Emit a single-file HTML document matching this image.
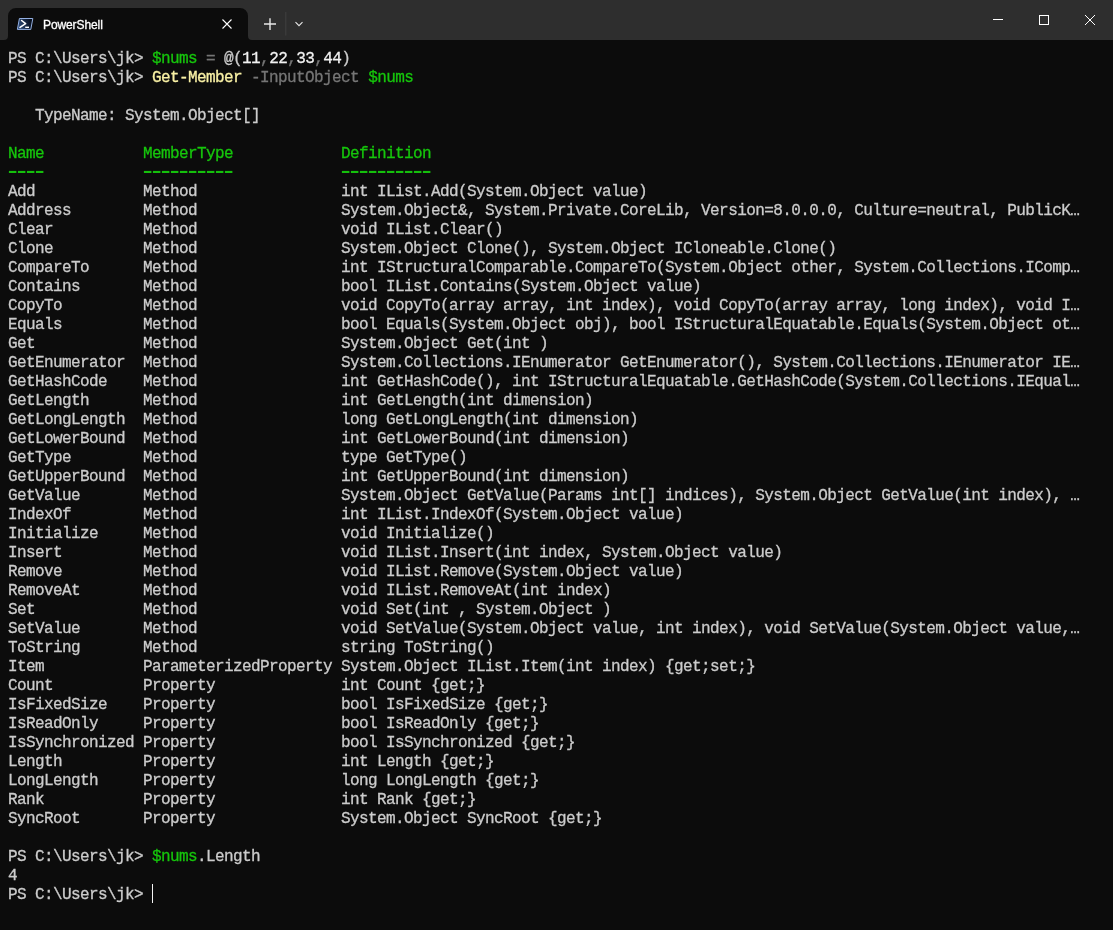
<!DOCTYPE html>
<html><head><meta charset="utf-8">
<style>
html,body{margin:0;padding:0;}
body{width:1113px;height:930px;overflow:hidden;background:#0c0c0c;position:relative;}
#tb{position:absolute;left:0;top:0;}
#tabt{position:absolute;left:43px;top:18px;letter-spacing:-0.1px;height:14px;line-height:14px;font:12px "Liberation Sans",sans-serif;color:#fff;-webkit-text-stroke:0.3px #fff;will-change:transform;}
#term{position:absolute;left:0;top:0;width:1113px;height:930px;will-change:transform;}
.r{position:absolute;left:8px;height:19px;line-height:19px;white-space:pre;font-family:"Liberation Mono",monospace;font-size:16px;letter-spacing:-0.6px;color:#cccccc;-webkit-font-smoothing:antialiased;-webkit-text-stroke:0.3px currentColor;}
.g{color:#16c60c}.d{color:#767676}.w{color:#f2f2f2}.y{color:#f9f1a5}.h{color:#16c60c}
.dash{position:absolute;height:2px;background:#15bc0c;}
#cur{position:absolute;left:152px;top:884px;width:1px;height:19px;background:#f4f4f4;}
</style></head><body>
<svg id="tb" width="1113" height="40" viewBox="0 0 1113 40">
<rect x="0" y="0" width="1113" height="40" fill="#2e2e2e"/>
<path d="M4 40 A4 4 0 0 0 8 36 L8 16 A8 8 0 0 1 16 8 L240 8 A8 8 0 0 1 248 16 L248 36 A4 4 0 0 0 252 40 Z" fill="#0c0c0c"/>
<defs><linearGradient id="ig" x1="0" y1="0.3" x2="1" y2="0.1"><stop offset="0" stop-color="#2c4a78"/><stop offset="0.5" stop-color="#152540"/><stop offset="1" stop-color="#03060e"/></linearGradient></defs>
<path d="M19.4 18.5 L32.8 18.5 L30.8 29.4 L17.4 29.4 Z" fill="url(#ig)" stroke="#94b0e2" stroke-width="1"/>
<path d="M21.6 20.5 L25.6 23.7 L20 27.4" fill="none" stroke="#fff" stroke-width="1.6" stroke-linecap="round" stroke-linejoin="round"/>
<path d="M25.2 27.3 L29 27.3" fill="none" stroke="#fff" stroke-width="1.4" stroke-linecap="butt"/>
<path d="M222.5 19.5 L231.5 28.5 M231.5 19.5 L222.5 28.5" stroke="#fff" stroke-width="1.1" fill="none"/>
<path d="M264 24 L276 24 M270 18.2 L270 30" stroke="#e8e8e8" stroke-width="1.4" fill="none"/>
<rect x="285.3" y="12" width="1" height="23.5" fill="#404040"/>
<path d="M295.5 22.2 L299 25.7 L302.5 22.2" stroke="#e8e8e8" stroke-width="1.1" fill="none"/>
<rect x="993" y="19" width="10" height="1" fill="#fff"/>
<rect x="1039.5" y="15.5" width="9" height="9" stroke="#fff" stroke-width="1" fill="none"/>
<path d="M1085 15 L1095 25 M1095 15 L1085 25" stroke="#fff" stroke-width="1" fill="none"/>
</svg>
<div id="tabt">PowerShell</div>
<div id="term">
<svg style="position:absolute;left:0;top:0" width="1113" height="300" fill="#15c00c"><rect x="8.9" y="170.9" width="7.5" height="2.1"/><rect x="17.9" y="170.9" width="7.5" height="2.1"/><rect x="26.9" y="170.9" width="7.5" height="2.1"/><rect x="35.9" y="170.9" width="7.5" height="2.1"/><rect x="143.9" y="170.9" width="7.5" height="2.1"/><rect x="152.9" y="170.9" width="7.5" height="2.1"/><rect x="161.9" y="170.9" width="7.5" height="2.1"/><rect x="170.9" y="170.9" width="7.5" height="2.1"/><rect x="179.9" y="170.9" width="7.5" height="2.1"/><rect x="188.9" y="170.9" width="7.5" height="2.1"/><rect x="197.9" y="170.9" width="7.5" height="2.1"/><rect x="206.9" y="170.9" width="7.5" height="2.1"/><rect x="215.9" y="170.9" width="7.5" height="2.1"/><rect x="224.9" y="170.9" width="7.5" height="2.1"/><rect x="341.9" y="170.9" width="7.5" height="2.1"/><rect x="350.9" y="170.9" width="7.5" height="2.1"/><rect x="359.9" y="170.9" width="7.5" height="2.1"/><rect x="368.9" y="170.9" width="7.5" height="2.1"/><rect x="377.9" y="170.9" width="7.5" height="2.1"/><rect x="386.9" y="170.9" width="7.5" height="2.1"/><rect x="395.9" y="170.9" width="7.5" height="2.1"/><rect x="404.9" y="170.9" width="7.5" height="2.1"/><rect x="413.9" y="170.9" width="7.5" height="2.1"/><rect x="422.9" y="170.9" width="7.5" height="2.1"/></svg>
<div class="r" style="top:50px">PS C:\Users\jk&gt; <span class="g">$nums</span> <span class="d">=</span> @(<span class="w">11</span><span class="d">,</span><span class="w">22</span><span class="d">,</span><span class="w">33</span><span class="d">,</span><span class="w">44</span>)</div>
<div class="r" style="top:69px">PS C:\Users\jk&gt; <span class="y">Get-Member</span> <span class="d">-InputObject</span> <span class="g">$nums</span></div>
<div class="r" style="top:107px">   TypeName: System.Object[]</div>
<div class="r" style="top:145px"><span class="h">Name           MemberType            Definition</span></div>
<div class="r" style="top:183px">Add            Method                int IList.Add(System.Object value)</div>
<div class="r" style="top:202px">Address        Method                System.Object&amp;, System.Private.CoreLib, Version=8.0.0.0, Culture=neutral, PublicK…</div>
<div class="r" style="top:221px">Clear          Method                void IList.Clear()</div>
<div class="r" style="top:240px">Clone          Method                System.Object Clone(), System.Object ICloneable.Clone()</div>
<div class="r" style="top:259px">CompareTo      Method                int IStructuralComparable.CompareTo(System.Object other, System.Collections.IComp…</div>
<div class="r" style="top:278px">Contains       Method                bool IList.Contains(System.Object value)</div>
<div class="r" style="top:297px">CopyTo         Method                void CopyTo(array array, int index), void CopyTo(array array, long index), void I…</div>
<div class="r" style="top:316px">Equals         Method                bool Equals(System.Object obj), bool IStructuralEquatable.Equals(System.Object ot…</div>
<div class="r" style="top:335px">Get            Method                System.Object Get(int )</div>
<div class="r" style="top:354px">GetEnumerator  Method                System.Collections.IEnumerator GetEnumerator(), System.Collections.IEnumerator IE…</div>
<div class="r" style="top:373px">GetHashCode    Method                int GetHashCode(), int IStructuralEquatable.GetHashCode(System.Collections.IEqual…</div>
<div class="r" style="top:392px">GetLength      Method                int GetLength(int dimension)</div>
<div class="r" style="top:411px">GetLongLength  Method                long GetLongLength(int dimension)</div>
<div class="r" style="top:430px">GetLowerBound  Method                int GetLowerBound(int dimension)</div>
<div class="r" style="top:449px">GetType        Method                type GetType()</div>
<div class="r" style="top:468px">GetUpperBound  Method                int GetUpperBound(int dimension)</div>
<div class="r" style="top:487px">GetValue       Method                System.Object GetValue(Params int[] indices), System.Object GetValue(int index), …</div>
<div class="r" style="top:506px">IndexOf        Method                int IList.IndexOf(System.Object value)</div>
<div class="r" style="top:525px">Initialize     Method                void Initialize()</div>
<div class="r" style="top:544px">Insert         Method                void IList.Insert(int index, System.Object value)</div>
<div class="r" style="top:563px">Remove         Method                void IList.Remove(System.Object value)</div>
<div class="r" style="top:582px">RemoveAt       Method                void IList.RemoveAt(int index)</div>
<div class="r" style="top:601px">Set            Method                void Set(int , System.Object )</div>
<div class="r" style="top:620px">SetValue       Method                void SetValue(System.Object value, int index), void SetValue(System.Object value,…</div>
<div class="r" style="top:639px">ToString       Method                string ToString()</div>
<div class="r" style="top:658px">Item           ParameterizedProperty System.Object IList.Item(int index) {get;set;}</div>
<div class="r" style="top:677px">Count          Property              int Count {get;}</div>
<div class="r" style="top:696px">IsFixedSize    Property              bool IsFixedSize {get;}</div>
<div class="r" style="top:715px">IsReadOnly     Property              bool IsReadOnly {get;}</div>
<div class="r" style="top:734px">IsSynchronized Property              bool IsSynchronized {get;}</div>
<div class="r" style="top:753px">Length         Property              int Length {get;}</div>
<div class="r" style="top:772px">LongLength     Property              long LongLength {get;}</div>
<div class="r" style="top:791px">Rank           Property              int Rank {get;}</div>
<div class="r" style="top:810px">SyncRoot       Property              System.Object SyncRoot {get;}</div>
<div class="r" style="top:848px">PS C:\Users\jk&gt; <span class="g">$nums</span>.Length</div>
<div class="r" style="top:867px">4</div>
<div class="r" style="top:886px">PS C:\Users\jk&gt; </div>
</div>
<div id="cur"></div>
</body></html>
